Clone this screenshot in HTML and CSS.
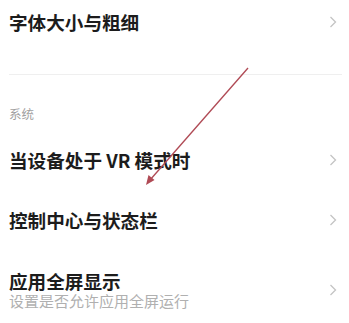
FILE: index.html
```html
<!DOCTYPE html>
<html lang="zh">
<head>
<meta charset="utf-8">
<link rel="stylesheet" href="styles.css">
</head>
<body>
<div class="page">
  <div class="row row-first">
    <div class="title">字体大小与粗细</div>
    <span class="chev"><svg width="8" height="12" viewBox="0 0 8 12"><path d="M1.5 1 L6.5 6 L1.5 11" fill="none" stroke="#c4c4c4" stroke-width="1.3"/></svg></span>
  </div>
  <div class="divider"></div>
  <div class="section">系统</div>
  <div class="row">
    <div class="title">当设备处于 VR 模式时</div>
    <span class="chev"><svg width="8" height="12" viewBox="0 0 8 12"><path d="M1.5 1 L6.5 6 L1.5 11" fill="none" stroke="#c4c4c4" stroke-width="1.3"/></svg></span>
  </div>
  <div class="row">
    <div class="title">控制中心与状态栏</div>
    <span class="chev"><svg width="8" height="12" viewBox="0 0 8 12"><path d="M1.5 1 L6.5 6 L1.5 11" fill="none" stroke="#c4c4c4" stroke-width="1.3"/></svg></span>
  </div>
  <div class="row row-two">
    <div class="texts">
      <div class="title">应用全屏显示</div>
      <div class="sub">设置是否允许应用全屏运行</div>
    </div>
    <span class="chev"><svg width="8" height="12" viewBox="0 0 8 12"><path d="M1.5 1 L6.5 6 L1.5 11" fill="none" stroke="#c4c4c4" stroke-width="1.3"/></svg></span>
  </div>
  <svg class="arrow" width="349" height="323" viewBox="0 0 349 323">
    <line x1="248" y1="68" x2="150" y2="180" stroke="#b04a55" stroke-width="1.4"/>
    <path d="M146 185 L148.5 175 L154.5 180 Z" fill="#b04a55"/>
  </svg>
</div>
</body>
</html>
```
FILE: styles.css
```css
html, body {
  margin: 0;
  padding: 0;
  background: #ffffff;
}
.page {
  position: relative;
  width: 349px;
  height: 323px;
  overflow: hidden;
  padding: 0 9px;
  box-sizing: border-box;
  font-family: "Noto Sans CJK SC", "Noto Sans", sans-serif;
  color: #1c1c1c;
}
.row {
  display: flex;
  align-items: center;
  justify-content: space-between;
  height: 60px;
}
.row-first {
  height: 44px;
}
.title {
  font-size: 18.6px;
  font-weight: 700;
  line-height: 22px;
}
.chev {
  display: flex;
  width: 8px;
  margin-right: 3px;
}
.divider {
  margin-top: 30px;
  height: 1px;
  background: #efefef;
  margin-right: -2px;
}
.section {
  margin-top: 30px;
  margin-bottom: 7px;
  font-size: 12.5px;
  line-height: 18px;
  color: #a0a0a0;
}
.row-two {
  height: auto;
  padding-top: 20px;
  align-items: flex-start;
}
.row-two .chev {
  margin-top: 14px;
}
.sub {
  font-size: 15px;
  line-height: 18px;
  color: #b0b0b0;
}
.arrow {
  position: absolute;
  left: 0;
  top: 0;
  pointer-events: none;
}
```
